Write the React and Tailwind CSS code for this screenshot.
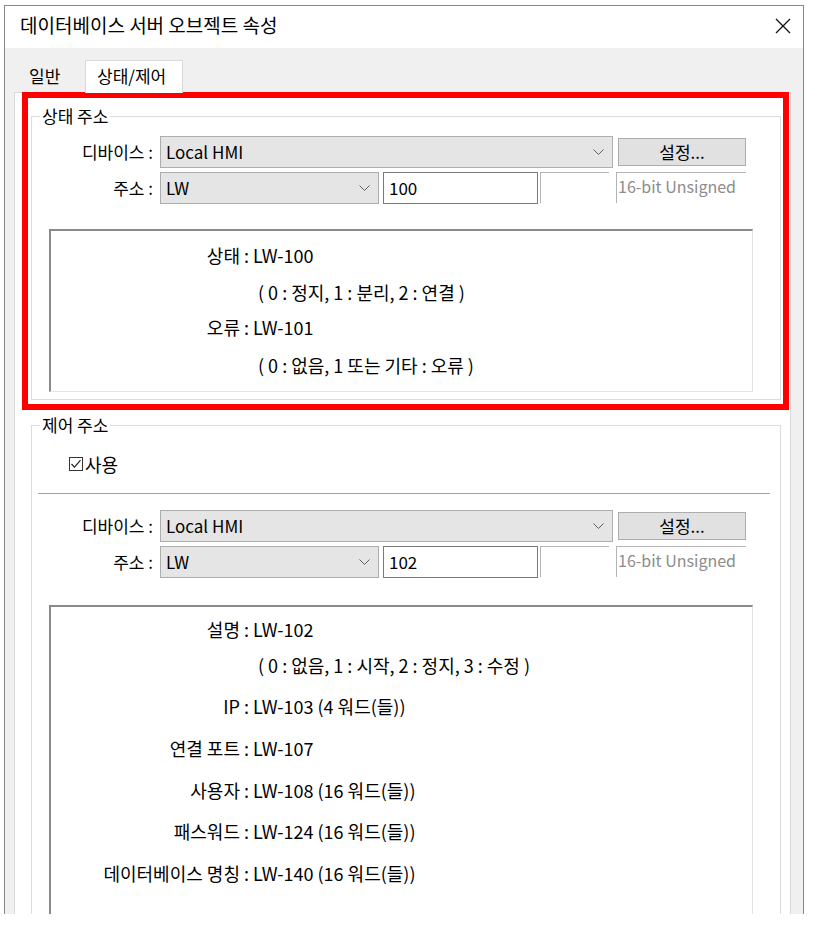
import React from "react";

const Chevron = () => (
  <svg width="11" height="6" viewBox="0 0 11 6" fill="none">
    <path d="M0.5 0.5 L5.5 5.5 L10.5 0.5" stroke="#606060" strokeWidth="1" />
  </svg>
);

const Select = ({ value, className }) => (
  <div
    className={`flex h-[32px] items-center justify-between border border-[#adadad] bg-[#e5e5e5] pl-[5px] pr-[8px] ${className}`}
  >
    <span>{value}</span>
    <Chevron />
  </div>
);

const AddressRows = ({ addr }) => (
  <div className="flex flex-col gap-[4px]">
    <div className="flex items-center">
      <div className="w-[121px] text-right">디바이스 :</div>
      <Select value="Local HMI" className="ml-[7px] w-[453px]" />
      <button className="ml-[5px] h-[28px] w-[128px] border border-[#adadad] bg-[#e1e1e1] leading-[26px]">
        설정...
      </button>
    </div>
    <div className="flex items-start">
      <div className="w-[121px] text-right leading-[32px]">주소 :</div>
      <Select value="LW" className="ml-[7px] w-[219px]" />
      <div className="ml-[4px] h-[32px] w-[155px] border border-[#7a7a7a] bg-white pl-[5px] leading-[30px]">
        {addr}
      </div>
      <div className="ml-[2px] h-[31px] w-[69px] border-l border-t border-[#b4b4b4]" />
      <div className="ml-[7px] h-[31px] w-[130px] border-l border-t border-[#b4b4b4] pl-[1px] text-[16px] leading-[26px] text-[#8c8c8c]">
        16-bit Unsigned
      </div>
    </div>
  </div>
);

const InfoBox = ({ rows, className }) => (
  <div
    className={`ml-[17px] w-[704px] border-b border-l-2 border-r border-t-2 border-b-[#e3e3e3] border-l-[#8a8a8a] border-r-[#e3e3e3] border-t-[#8a8a8a] bg-white text-[18px] ${className}`}
  >
    {rows.map((r, i) => (
      <div key={i} className={`grid grid-cols-[198px_1fr] leading-[20px] ${r.mt}`}>
        <div className="text-right">{r.label}</div>
        <div className={r.label ? "pl-[4px]" : "pl-[9px]"}>{r.value}</div>
      </div>
    ))}
  </div>
);

const statusRows = [
  { label: "상태 :", value: "LW-100", mt: "mt-[14px]" },
  { label: "", value: "( 0 : 정지, 1 : 분리, 2 : 연결 )", mt: "mt-[17px]" },
  { label: "오류 :", value: "LW-101", mt: "mt-[15px]" },
  { label: "", value: "( 0 : 없음, 1 또는 기타 : 오류 )", mt: "mt-[18px]" },
];

const controlRows = [
  { label: "설명 :", value: "LW-102", mt: "mt-[12px]" },
  { label: "", value: "( 0 : 없음, 1 : 시작, 2 : 정지, 3 : 수정 )", mt: "mt-[16px]" },
  { label: "IP :", value: "LW-103 (4 워드(들))", mt: "mt-[21px]" },
  { label: "연결 포트 :", value: "LW-107", mt: "mt-[22px]" },
  { label: "사용자 :", value: "LW-108 (16 워드(들))", mt: "mt-[22px]" },
  { label: "패스워드 :", value: "LW-124 (16 워드(들))", mt: "mt-[21px]" },
  { label: "데이터베이스 명칭 :", value: "LW-140 (16 워드(들))", mt: "mt-[22px]" },
];

export default function App() {
  return (
    <div className="relative h-[931px] w-[818px] overflow-hidden bg-white pl-[4px] pt-[5px] font-['Noto_Sans_CJK_KR','Noto_Sans',sans-serif] text-[17px] text-black">
      <div className="flex h-[909px] w-[800px] flex-col overflow-hidden border-l border-r border-t border-[#888888]">
        {/* title bar */}
        <div className="flex h-[42px] shrink-0 items-start justify-between bg-white pl-[15px] pr-[12px] pt-[6px]">
          <span className="text-[19px] leading-[26px]">데이터베이스 서버 오브젝트 속성</span>
          <svg width="16" height="16" viewBox="0 0 16 16" className="mt-[6px]">
            <path d="M1 1 L15 15 M15 1 L1 15" stroke="#111" strokeWidth="1.3" />
          </svg>
        </div>

        <div className="flex flex-1 flex-col bg-[#f0f0f0] pl-[9px] pt-[12px]">
          {/* tabs */}
          <div className="flex h-[32px] items-end">
            <div className="h-[29px] w-[71px] pl-[15px] leading-[26px]">일반</div>
            <div className="relative z-10 -mb-px h-[33px] w-[98px] border-l border-r border-t border-[#d9d9d9] bg-white pl-[11px] leading-[30px]">
              상태/제어
            </div>
          </div>

          {/* tab panel */}
          <div className="w-[777px] flex-1 border border-[#d9d9d9] bg-white">
            <fieldset className="ml-[16px] mt-[13px] w-[750px] border border-[#dcdcdc] pb-[7px]">
              <legend className="ml-[8px] px-[2px] leading-[20px]">상태 주소</legend>
              <div className="mt-[10px]">
                <AddressRows addr="100" />
              </div>
              <InfoBox rows={statusRows} className="mt-[25px] h-[163px]" />
            </fieldset>

            <fieldset className="ml-[16px] mt-[15px] w-[750px] border border-[#dcdcdc]">
              <legend className="ml-[8px] px-[2px] leading-[20px]">제어 주소</legend>
              <div className="ml-[37px] mt-[19px] flex h-[20px] items-center gap-[2px]">
                <svg width="14" height="14" viewBox="0 0 14 14">
                  <rect x="0.5" y="0.5" width="13" height="13" fill="#fff" stroke="#333" />
                  <path d="M2.5 7 L5.5 10.2 L11.5 3.2" fill="none" stroke="#222" strokeWidth="1.2" />
                </svg>
                <span className="text-[18px] leading-[20px]">사용</span>
              </div>
              <div className="ml-[6px] mt-[19px] h-px w-[732px] bg-[#a0a0a0]" />
              <div className="mt-[16px]">
                <AddressRows addr="102" />
              </div>
              <InfoBox rows={controlRows} className="mt-[27px] h-[400px]" />
            </fieldset>
          </div>
        </div>
      </div>

      {/* red highlight annotation */}
      <div className="pointer-events-none absolute left-[22px] top-[92px] h-[318px] w-[767px] border-[6px] border-[#ff0000]" />
    </div>
  );
}
